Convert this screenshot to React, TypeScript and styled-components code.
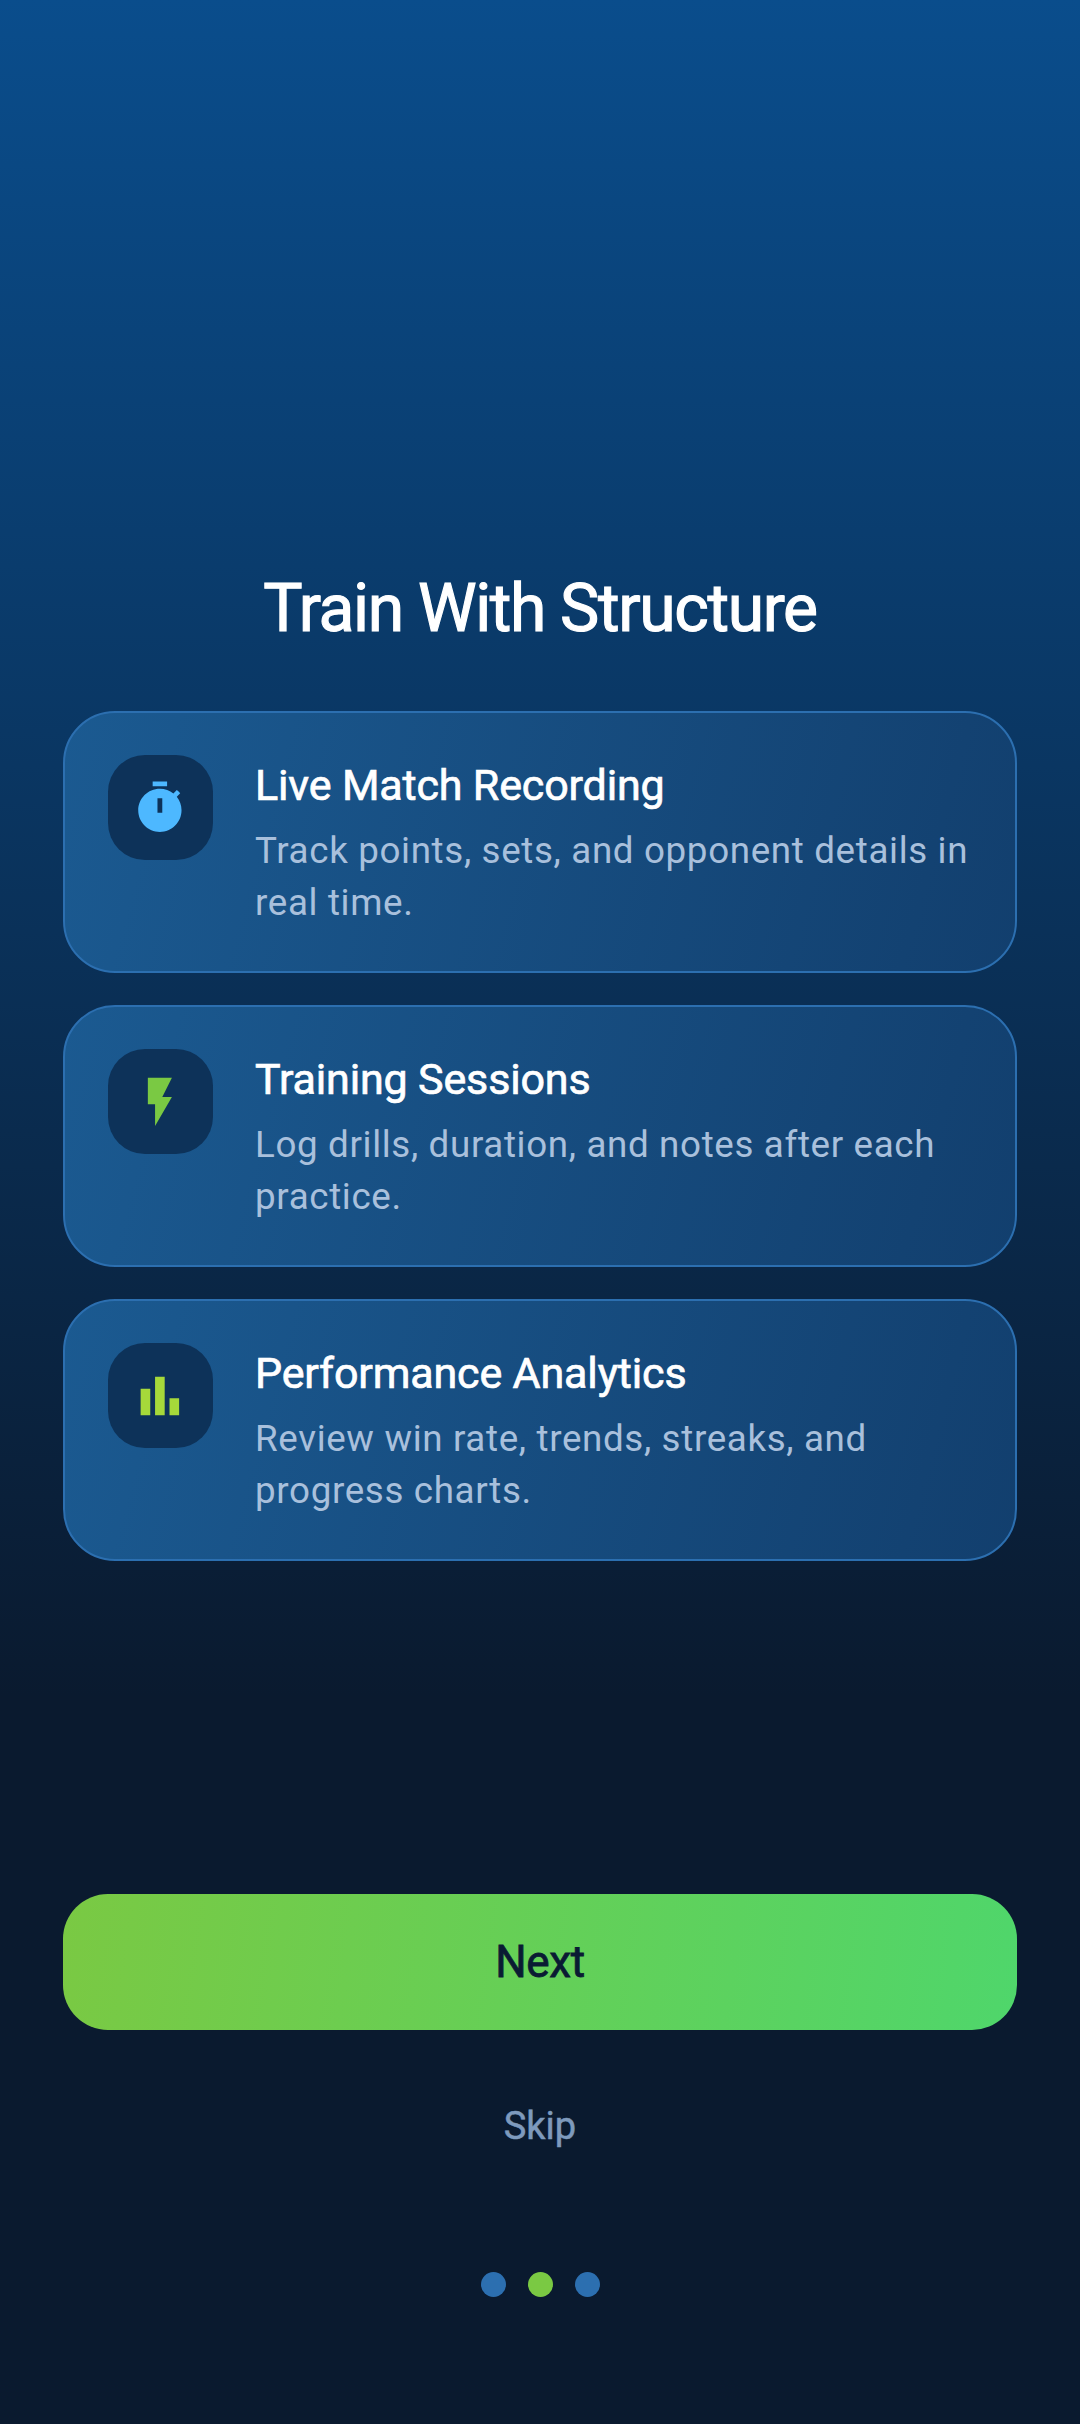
import styled, { createGlobalStyle } from 'styled-components';

const GlobalStyle = createGlobalStyle`
  html, body {
    margin: 0;
    padding: 0;
    background: #0a1a2f;
  }
  * {
    box-sizing: border-box;
  }
`;

const Page = styled.div`
  width: 1080px;
  height: 2424px;
  padding: 564px 63px 127px;
  display: flex;
  flex-direction: column;
  font-family: Roboto, 'Liberation Sans', sans-serif;
  background: linear-gradient(180deg, #0a4d8c 0%, #0a1a2f 70%);
`;

const Heading = styled.h1`
  margin: 0 0 57px;
  height: 90px;
  font-size: 66px;
  line-height: 90px;
  font-weight: 400;
  letter-spacing: -1.35px;
  -webkit-text-stroke: 1.1px #ffffff;
  color: #ffffff;
  text-align: center;
`;

const CardList = styled.div`
  display: flex;
  flex-direction: column;
  gap: 32px;
`;

const Card = styled.div`
  height: 262px;
  padding: 42px 43px;
  display: flex;
  gap: 42px;
  border: 2px solid #2c6fb0;
  border-radius: 52px;
  background: linear-gradient(105.4deg, #1b5a91 0%, #123f6e 100%);
`;

const IconBox = styled.div`
  flex: none;
  width: 105px;
  height: 105px;
  padding-right: 1px;
  display: flex;
  align-items: center;
  justify-content: center;
  border-radius: 37px;
  background: #0d3259;
`;

const Glyph = styled.svg<{ $color: string }>`
  width: 57.75px;
  height: 57.75px;
  fill: ${({ $color }) => $color};
`;

const CardText = styled.div`
  flex: 1;
  min-width: 0;
`;

const CardTitle = styled.div`
  height: 70px;
  padding-top: 1px;
  font-size: 43px;
  line-height: 58px;
  font-weight: 400;
  letter-spacing: -0.15px;
  -webkit-text-stroke: 0.7px #ffffff;
  color: #ffffff;
`;

const CardBody = styled.div`
  font-size: 36.75px;
  line-height: 52px;
  letter-spacing: 0.65px;
  color: #a9c0dc;
`;

const Footer = styled.div`
  margin-top: auto;
  display: flex;
  flex-direction: column;
  align-items: center;
`;

const NextButton = styled.button`
  width: 100%;
  height: 136px;
  border: none;
  border-radius: 45px;
  font-family: inherit;
  font-size: 44px;
  font-weight: 400;
  letter-spacing: -0.3px;
  -webkit-text-stroke: 0.8px #0a1b33;
  color: #0a1b33;
  background: linear-gradient(98deg, #7ac943 0%, #4fd66b 100%);
`;

const SkipLink = styled.div`
  margin-top: 70px;
  height: 52px;
  font-size: 38px;
  line-height: 52px;
  font-weight: 400;
  -webkit-text-stroke: 0.5px #7e9abd;
  color: #7e9abd;
`;

const Dots = styled.div`
  margin-top: 120px;
  display: flex;
  gap: 22px;
`;

const Dot = styled.span<{ $active?: boolean }>`
  width: 25px;
  height: 25px;
  border-radius: 50%;
  background: ${({ $active }) => ($active ? '#7ac943' : '#2c6fb0')};
`;

const features = [
  {
    title: 'Live Match Recording',
    body: 'Track points, sets, and opponent details in real time.',
    color: '#4db8ff',
    path: 'M15 1H9v2h6V1zM19.03 7.39l1.42-1.42c-.43-.51-.9-.99-1.41-1.41l-1.42 1.42C16.07 4.74 14.12 4 12 4c-4.97 0-9 4.03-9 9s4.02 9 9 9 9-4.03 9-9c0-2.12-.74-4.07-1.97-5.61zM13 14h-2V8h2v6z',
  },
  {
    title: 'Training Sessions',
    body: 'Log drills, duration, and notes after each practice.',
    color: '#7ac943',
    path: 'M7 2v11h3v9l7-12h-4l4-8z',
  },
  {
    title: 'Performance Analytics',
    body: 'Review win rate, trends, streaks, and progress charts.',
    color: '#a6d93a',
    path: 'M4 9h4v11H4zM10 4h4v16h-4zM16 13h4v7h-4z',
  },
];

const App = () => {
  return (
    <>
      <GlobalStyle />
      <Page>
        <Heading>Train With Structure</Heading>
        <CardList>
          {features.map((item) => (
            <Card key={item.title}>
              <IconBox>
                <Glyph $color={item.color} viewBox="0 0 24 24">
                  <path d={item.path} />
                </Glyph>
              </IconBox>
              <CardText>
                <CardTitle>{item.title}</CardTitle>
                <CardBody>{item.body}</CardBody>
              </CardText>
            </Card>
          ))}
        </CardList>
        <Footer>
          <NextButton>Next</NextButton>
          <SkipLink>Skip</SkipLink>
          <Dots>
            <Dot />
            <Dot $active />
            <Dot />
          </Dots>
        </Footer>
      </Page>
    </>
  );
};

export default App;
